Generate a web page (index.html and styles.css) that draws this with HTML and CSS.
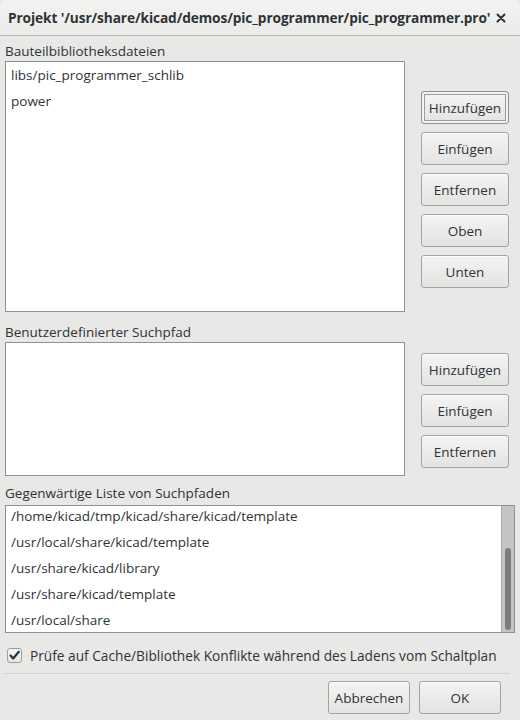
FILE: index.html
```html
<!DOCTYPE html>
<html lang="de">
<head>
<meta charset="utf-8">
<title>Projekt</title>
<link rel="stylesheet" href="styles.css">
</head>
<body>
<div class="window">
  <div class="titlebar">
    <span class="title">Projekt '/usr/share/kicad/demos/pic_programmer/pic_programmer.pro'</span>
    <span class="close">
      <svg width="10" height="10" viewBox="0 0 10 10"><path d="M1.5 1.5 L8.5 8.5 M8.5 1.5 L1.5 8.5" stroke="#2e3436" stroke-width="2" stroke-linecap="round"/></svg>
    </span>
  </div>
  <div class="content">
    <div class="label l1">Bauteilbibliotheksdateien</div>
    <div class="row">
      <div class="list list1">
        <div class="item">libs/pic_programmer_schlib</div>
        <div class="item">power</div>
      </div>
      <div class="btncol b1">
        <button class="btn focus">Hinzufügen</button>
        <button class="btn">Einfügen</button>
        <button class="btn">Entfernen</button>
        <button class="btn">Oben</button>
        <button class="btn">Unten</button>
      </div>
    </div>

    <div class="label l2">Benutzerdefinierter Suchpfad</div>
    <div class="row">
      <div class="list list2"></div>
      <div class="btncol b2">
        <button class="btn">Hinzufügen</button>
        <button class="btn">Einfügen</button>
        <button class="btn">Entfernen</button>
      </div>
    </div>

    <div class="label l3">Gegenwärtige Liste von Suchpfaden</div>
    <div class="list list3">
      <div class="items3">
        <div class="item">/home/kicad/tmp/kicad/share/kicad/template</div>
        <div class="item">/usr/local/share/kicad/template</div>
        <div class="item">/usr/share/kicad/library</div>
        <div class="item">/usr/share/kicad/template</div>
        <div class="item">/usr/local/share</div>
      </div>
      <div class="scrollbar"><div class="thumb"></div></div>
    </div>

    <label class="check">
      <span class="box">
        <svg width="13" height="13" viewBox="0 0 13 13"><path d="M2.5 6.5 L5.2 9.5 L10.8 2.8" fill="none" stroke="#2e3436" stroke-width="2.2" stroke-linecap="round" stroke-linejoin="round"/></svg>
      </span>
      <span class="checktext">Prüfe auf Cache/Bibliothek Konflikte während des Ladens vom Schaltplan</span>
    </label>

    <div class="sep"></div>

    <div class="actions">
      <button class="btn act">Abbrechen</button>
      <button class="btn act">OK</button>
    </div>
  </div>
</div>
</body>
</html>
```
FILE: styles.css
```css
* { box-sizing: border-box; }
html, body { margin: 0; padding: 0; }
body {
  width: 520px;
  height: 720px;
  background: #e8e8e7;
  font-family: "Open Sans", "DejaVu Sans", sans-serif;
  font-size: 13.5px;
  color: #2e3436;
  overflow: hidden;
}
.window {
  width: 520px;
  height: 720px;
  display: flex;
  flex-direction: column;
  background: #e8e8e7;
}
.titlebar {
  height: 36px;
  flex: none;
  display: flex;
  align-items: center;
  justify-content: space-between;
  padding: 0 14px 0 8px;
  background: linear-gradient(#f3f3f2, #ebebea);
  border-bottom: 1px solid #b9b9b6;
  border-radius: 6px 6px 0 0;
}
.title {
  font-weight: 700;
  font-size: 13.7px;
  color: #2e3436;
  white-space: nowrap;
  letter-spacing: -0.1px;
}
.close { display: flex; align-items: center; }
.content {
  padding: 0 5px;
  display: flex;
  flex-direction: column;
}
.label {
  height: 20px;
  line-height: 20px;
  white-space: nowrap;
}
.l1 { margin-top: 5px; }
.l2 { margin-top: 10px; }
.l3 { margin-top: 7px; }
.row {
  display: flex;
  align-items: flex-start;
}
.list {
  background: #ffffff;
  border: 1px solid #8f9192;
  overflow: hidden;
}
.list1 { width: 400px; height: 251px; }
.list2 { width: 400px; height: 134px; }
.item {
  height: 26px;
  line-height: 26px;
  padding-left: 5px;
  white-space: nowrap;
}
.btncol {
  display: flex;
  flex-direction: column;
  gap: 8px;
  margin-left: 16px;
}
.b1 { margin-top: 30px; }
.b2 { margin-top: 11px; }
.btn {
  font-family: inherit;
  font-size: 13.5px;
  color: #2e3436;
  height: 33px;
  width: 88px;
  padding: 0;
  border: 1px solid #a3a3a1;
  border-radius: 3px;
  background: linear-gradient(#f4f4f4, #e3e3e2);
  box-shadow: inset 0 1px 0 rgba(255,255,255,0.8);
}
.btn.focus {
  box-shadow: inset 0 0 0 2px #f2f2f2, inset 0 0 0 3px #9c9c9c;
  border-color: #8f8f8d;
}
.list3 {
  margin-top: 2px;
  width: 510px;
  height: 128px;
  display: flex;
  position: relative;
}
.items3 {
  flex: 1;
  margin-top: -3px;
}
.scrollbar {
  width: 13px;
  flex: none;
  background: #c4c4c2;
  border-left: 1px solid #a8a8a6;
  position: relative;
}
.thumb {
  position: absolute;
  left: 3px;
  width: 6px;
  top: 42px;
  height: 82px;
  border-radius: 3px;
  background: #7c7e7c;
}
.check {
  margin-top: 13px;
  height: 18px;
  display: flex;
  align-items: center;
  gap: 8px;
  padding-left: 2px;
  white-space: nowrap;
}
.checktext { font-size: 13.7px; }
.box {
  width: 15px;
  height: 15px;
  border: 1px solid #9d9d9b;
  border-radius: 3px;
  background: linear-gradient(#f6f6f6, #e6e6e5);
  display: flex;
  align-items: center;
  justify-content: center;
}
.sep {
  margin-top: 9px;
  height: 1px;
  width: 505px;
  background: #d0d0ce;
}
.actions {
  margin-top: 7px;
  display: flex;
  justify-content: flex-end;
  gap: 9px;
  padding-right: 14px;
}
.btn.act { width: 82px; }
```
